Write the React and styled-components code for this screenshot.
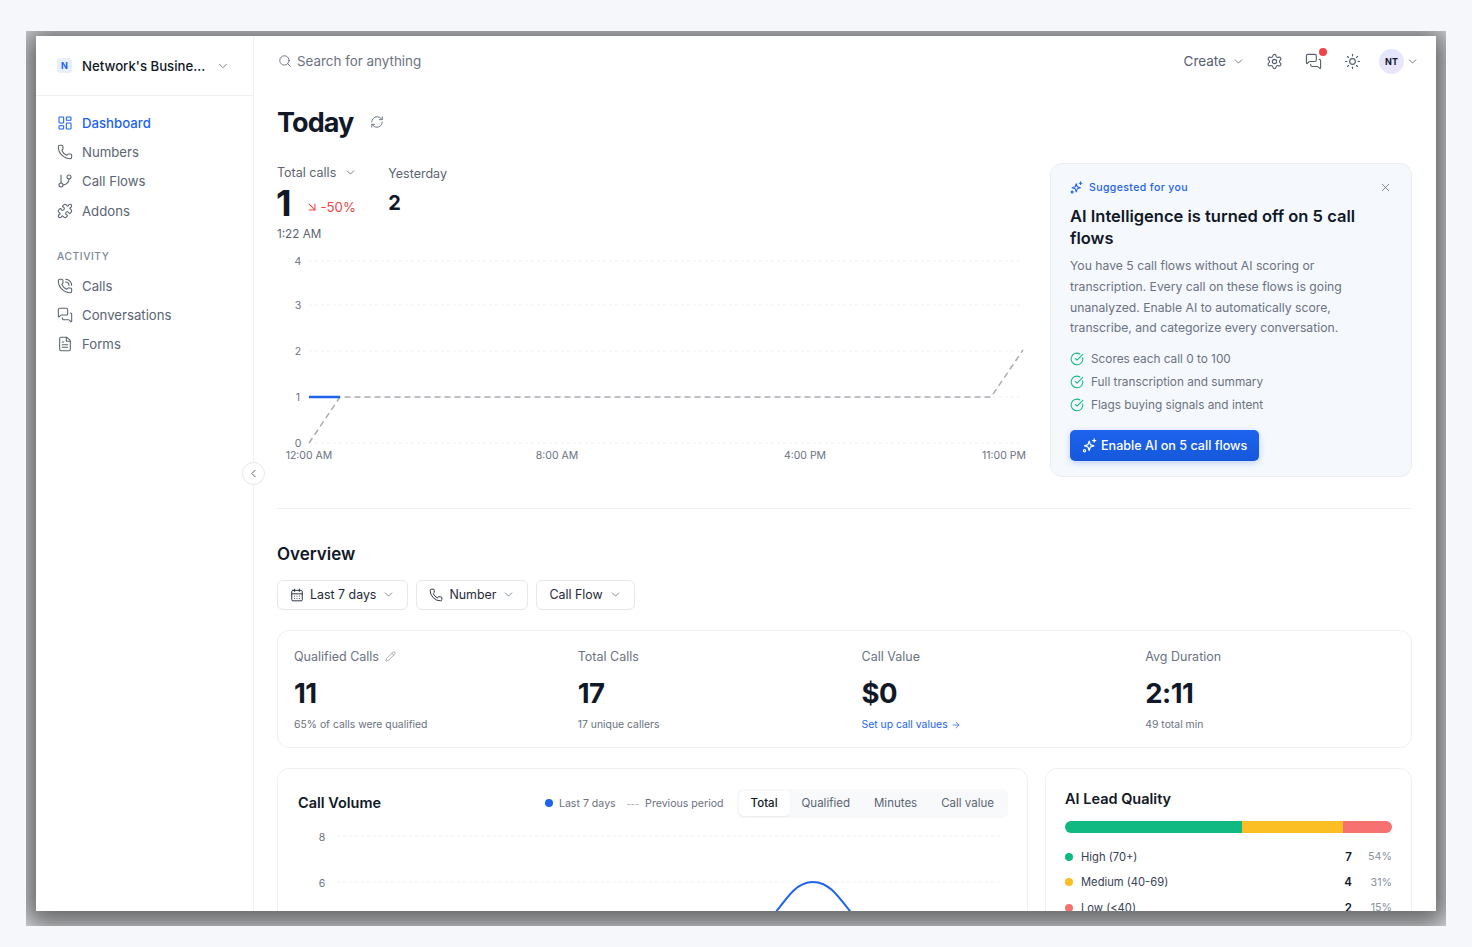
import styled, { createGlobalStyle } from "styled-components";
import {
	ArrowDownRight,
	ArrowRight,
	CalendarDays,
	ChevronDown,
	ChevronLeft,
	CircleCheckBig,
	FileText,
	GitBranch,
	LayoutDashboard,
	MessagesSquare,
	Pencil,
	Phone,
	PhoneCall,
	Puzzle,
	RefreshCw,
	Search,
	Settings,
	Sun,
	X,
} from "lucide-react";

const mainNav = [
	{ label: "Dashboard", icon: LayoutDashboard, active: true },
	{ label: "Numbers", icon: Phone },
	{ label: "Call Flows", icon: GitBranch },
	{ label: "Addons", icon: Puzzle },
];

const activityNav = [
	{ label: "Calls", icon: PhoneCall },
	{ label: "Conversations", icon: MessagesSquare },
	{ label: "Forms", icon: FileText },
];

const benefits = [
	"Scores each call 0 to 100",
	"Full transcription and summary",
	"Flags buying signals and intent",
];

const stats = [
	{ label: "Qualified Calls", value: "11", sub: "65% of calls were qualified", editable: true },
	{ label: "Total Calls", value: "17", sub: "17 unique callers" },
	{ label: "Call Value", value: "$0", link: "Set up call values" },
	{ label: "Avg Duration", value: "2:11", sub: "49 total min" },
];

const quality = [
	{ label: "High (70+)", count: 7, pct: 54, color: "#10b981" },
	{ label: "Medium (40-69)", count: 4, pct: 31, color: "#fbbf24" },
	{ label: "Low (<40)", count: 2, pct: 15, color: "#f87171" },
];

const todayTicks = [
	{ label: "4", y: 11 },
	{ label: "3", y: 55 },
	{ label: "2", y: 101 },
	{ label: "1", y: 147 },
	{ label: "0", y: 193 },
];

const SparkIcon = ({ size = 13 }) => (
	<svg width={size} height={size} viewBox="0 0 24 24" fill="none" stroke="currentColor" strokeWidth="2" strokeLinejoin="round">
		<path d="M11.5 5l1.9 5.6 5.6 1.9-5.6 1.9-1.9 5.6-1.9-5.6L4 12.5l5.6-1.9z" />
		<path d="M19.5 1.5v5M17 4h5" strokeLinecap="round" />
		<circle cx="4" cy="20.5" r="1.8" />
	</svg>
);

const TodayChart = () => (
	<ChartSvg width="753" height="215" viewBox="0 0 753 215">
		{todayTicks.map((t) => (
			<g key={t.label}>
				<line x1="32" x2="745" y1={t.y} y2={t.y} stroke="#f0f1f4" strokeDasharray="3 3" />
				<text x="21" y={t.y + 4} textAnchor="middle">{t.label}</text>
			</g>
		))}
		<path d="M32 193L63 147H714L746 100" fill="none" stroke="#a8acb3" strokeWidth="1.5" strokeDasharray="6 4" />
		<line x1="32" x2="63" y1="147" y2="147" stroke="#1d63ed" strokeWidth="2.5" />
		<text x="32" y="209" textAnchor="middle">12:00 AM</text>
		<text x="280" y="209" textAnchor="middle">8:00 AM</text>
		<text x="528" y="209" textAnchor="middle">4:00 PM</text>
		<text x="727" y="209" textAnchor="middle">11:00 PM</text>
	</ChartSvg>
);

const VolumeChart = () => (
	<ChartSvg width="711" height="100" viewBox="0 0 711 100">
		<line x1="39" x2="705" y1="8" y2="8" stroke="#f0f1f4" strokeDasharray="3 3" />
		<line x1="39" x2="705" y1="54" y2="54" stroke="#f0f1f4" strokeDasharray="3 3" />
		<text x="24" y="13" textAnchor="middle">8</text>
		<text x="24" y="59" textAnchor="middle">6</text>
		<path d="M466 100C490 68 498 54 515 54C532 54 540 68 565 100" fill="none" stroke="#1d63ed" strokeWidth="2" />
	</ChartSvg>
);

const NavList = ({ items }) => (
	<Nav>
		{items.map(({ label, icon: Icon, active }) => (
			<NavItem key={label} $active={active}>
				<Icon size={16} strokeWidth={1.6} />
				{label}
			</NavItem>
		))}
	</Nav>
);

const App = () => {
	return (
		<>
			<GlobalStyle />
			<Stage>
				<ShadowClip>
					<Frame>
						<Sidebar>
							<Workspace>
								<WorkspaceLogo>N</WorkspaceLogo>
								<WorkspaceName>Network's Busine...</WorkspaceName>
								<ChevronDown size={14} strokeWidth={1.5} color="#6b7280" />
							</Workspace>
							<NavList items={mainNav} />
							<SectionLabel>Activity</SectionLabel>
							<NavList items={activityNav} />
							<CollapseButton>
								<ChevronLeft size={13} strokeWidth={1.75} />
							</CollapseButton>
						</Sidebar>

						<Main>
							<Topbar>
								<SearchBox>
									<Search size={14} strokeWidth={1.6} />
									Search for anything
								</SearchBox>
								<TopActions>
									<CreateButton>
										Create
										<ChevronDown size={13} strokeWidth={1.5} />
									</CreateButton>
									<TopIcon>
										<Settings size={17} strokeWidth={1.6} />
									</TopIcon>
									<TopIcon>
										<MessagesSquare size={17} strokeWidth={1.6} />
										<RedDot />
									</TopIcon>
									<TopIcon>
										<Sun size={17} strokeWidth={1.6} />
									</TopIcon>
									<AvatarGroup>
										<Avatar>NT</Avatar>
										<ChevronDown size={13} strokeWidth={1.5} />
									</AvatarGroup>
								</TopActions>
							</Topbar>

							<Content>
								<TitleRow>
									<Title>Today</Title>
									<RefreshCw size={14} strokeWidth={1.6} color="#6b7280" />
								</TitleRow>

								<Hero>
									<div>
										<KpiRow>
											<div>
												<KpiLabel>
													Total calls
													<ChevronDown size={13} strokeWidth={1.5} />
												</KpiLabel>
												<KpiValueRow>
													<KpiValue>1</KpiValue>
													<KpiDelta>
														<ArrowDownRight size={14} strokeWidth={1.75} />
														-50%
													</KpiDelta>
												</KpiValueRow>
												<KpiTime>1:22 AM</KpiTime>
											</div>
											<YesterdayColumn>
												<KpiLabel>Yesterday</KpiLabel>
												<YesterdayValue>2</YesterdayValue>
											</YesterdayColumn>
										</KpiRow>
										<TodayChart />
									</div>

									<SuggestCard>
										<SuggestHead>
											<SuggestTag>
												<SparkIcon />
												Suggested for you
											</SuggestTag>
											<X size={13} strokeWidth={1.5} color="#6b7280" />
										</SuggestHead>
										<SuggestTitle>AI Intelligence is turned off on 5 call flows</SuggestTitle>
										<SuggestBody>
											You have 5 call flows without AI scoring or transcription. Every call on these flows is going
											unanalyzed. Enable AI to automatically score, transcribe, and categorize every conversation.
										</SuggestBody>
										<BenefitList>
											{benefits.map((text) => (
												<Benefit key={text}>
													<CircleCheckBig size={14} strokeWidth={1.75} color="#10b981" />
													{text}
												</Benefit>
											))}
										</BenefitList>
										<EnableButton>
											<SparkIcon size={15} />
											Enable AI on 5 call flows
										</EnableButton>
									</SuggestCard>
								</Hero>

								<Divider />

								<SectionTitle>Overview</SectionTitle>
								<Filters>
									<FilterButton>
										<CalendarDays size={14} strokeWidth={1.6} />
										Last 7 days
										<ChevronDown size={13} strokeWidth={1.5} color="#6b7280" />
									</FilterButton>
									<FilterButton>
										<Phone size={14} strokeWidth={1.6} />
										Number
										<ChevronDown size={13} strokeWidth={1.5} color="#6b7280" />
									</FilterButton>
									<FilterButton>
										Call Flow
										<ChevronDown size={13} strokeWidth={1.5} color="#6b7280" />
									</FilterButton>
								</Filters>

								<StatsCard>
									{stats.map((stat) => (
										<Stat key={stat.label}>
											<StatLabel>
												{stat.label}
												{stat.editable && <Pencil size={11} strokeWidth={1.25} />}
											</StatLabel>
											<StatValue>{stat.value}</StatValue>
											{stat.link ? (
												<StatLink>
													{stat.link}
													<ArrowRight size={10} strokeWidth={1.75} />
												</StatLink>
											) : (
												<StatSub>{stat.sub}</StatSub>
											)}
										</Stat>
									))}
								</StatsCard>

								<BottomGrid>
									<VolumeCard>
										<VolumeHead>
											<CardTitle>Call Volume</CardTitle>
											<VolumeControls>
												<Legend>
													<LegendDot />
													Last 7 days
												</Legend>
												<Legend>
													<LegendDash>---</LegendDash>
													Previous period
												</Legend>
												<Tabs>
													<Tab $active>Total</Tab>
													<Tab>Qualified</Tab>
													<Tab>Minutes</Tab>
													<Tab>Call value</Tab>
												</Tabs>
											</VolumeControls>
										</VolumeHead>
										<VolumeChart />
									</VolumeCard>

									<QualityCard>
										<QualityTitle>AI Lead Quality</QualityTitle>
										<QualityBar>
											{quality.map((q) => (
												<QualitySegment key={q.label} $color={q.color} style={{ width: `${q.pct}%` }} />
											))}
										</QualityBar>
										{quality.map((q) => (
											<QualityRow key={q.label}>
												<QualityDot $color={q.color} />
												<QualityName>{q.label}</QualityName>
												<QualityCount>{q.count}</QualityCount>
												<QualityPct>{q.pct}%</QualityPct>
											</QualityRow>
										))}
									</QualityCard>
								</BottomGrid>
							</Content>
						</Main>
					</Frame>
				</ShadowClip>
			</Stage>
		</>
	);
};

export default App;

// Styled components
const GlobalStyle = createGlobalStyle`
	html, body {
		margin: 0;
		height: 100%;
		overflow: hidden;
		background: #f5f7fb;
	}
	body {
		font-family: Inter, "Liberation Sans", sans-serif;
		color: #111827;
	}
	* {
		box-sizing: border-box;
	}
`;

const Stage = styled.div`
	width: 1472px;
	height: 947px;
	padding: 31px 26px 21px;
`;

const ShadowClip = styled.div`
	height: 895px;
	padding: 5px 10px 15px;
	overflow: hidden;
`;

const Frame = styled.div`
	display: flex;
	height: 875px;
	overflow: hidden;
	background: #fff;
	box-shadow: 0 4px 30px 14px rgba(0, 0, 0, 0.6);
`;

const Sidebar = styled.aside`
	position: relative;
	z-index: 1;
	flex: 0 0 218px;
	border-right: 1px solid #f0f1f4;
`;

const Workspace = styled.div`
	display: flex;
	align-items: center;
	height: 60px;
	padding: 0 23px 0 21px;
	border-bottom: 1px solid #f0f1f4;
`;

const WorkspaceLogo = styled.div`
	display: flex;
	align-items: center;
	justify-content: center;
	width: 15px;
	height: 15px;
	margin-right: 10px;
	border-radius: 3px;
	background: #e8f0fe;
	color: #1d63ed;
	font-size: 9px;
	font-weight: 700;
`;

const WorkspaceName = styled.div`
	flex: 1;
	font-size: 13.2px;
	font-weight: 500;
	white-space: nowrap;
`;

const Nav = styled.nav`
	display: flex;
	flex-direction: column;
	padding: 12px 0 0 21px;
`;

const NavItem = styled.a`
	display: flex;
	align-items: center;
	gap: 9px;
	height: 29.3px;
	font-size: 13.2px;
	font-weight: ${({ $active }) => ($active ? 500 : 400)};
	color: ${({ $active }) => ($active ? "#1d63ed" : "#5b6472")};
`;

const SectionLabel = styled.div`
	margin: 24px 0 -4px 21px;
	font-size: 10.2px;
	font-weight: 500;
	line-height: 14px;
	letter-spacing: 0.6px;
	text-transform: uppercase;
	color: #7d8592;
`;

const CollapseButton = styled.button`
	position: absolute;
	top: 426px;
	right: -12px;
	display: flex;
	align-items: center;
	justify-content: center;
	width: 23px;
	height: 23px;
	padding: 0;
	border: 1px solid #e5e7eb;
	border-radius: 50%;
	background: #fff;
	color: #4b5563;
`;

const Main = styled.main`
	flex: 1;
	min-width: 0;
`;

const Topbar = styled.header`
	display: flex;
	align-items: center;
	justify-content: space-between;
	height: 50px;
	padding: 0 17px 0 24px;
`;

const SearchBox = styled.div`
	display: flex;
	align-items: center;
	gap: 5px;
	font-size: 13.4px;
	color: #6b7280;
`;

const TopActions = styled.div`
	display: flex;
	align-items: center;
	color: #566070;
`;

const CreateButton = styled.div`
	display: flex;
	align-items: center;
	gap: 6px;
	margin-right: 21px;
	font-size: 13.5px;
`;

const TopIcon = styled.div`
	position: relative;
	display: flex;
	width: 17px;
	margin-right: 22px;
`;

const RedDot = styled.span`
	position: absolute;
	top: -5px;
	right: -5px;
	width: 8px;
	height: 8px;
	border-radius: 50%;
	background: #ef4444;
`;

const AvatarGroup = styled.div`
	display: flex;
	align-items: center;
	gap: 2px;
	margin-left: -4px;
`;

const Avatar = styled.div`
	display: flex;
	align-items: center;
	justify-content: center;
	width: 25px;
	height: 25px;
	border-radius: 50%;
	background: linear-gradient(135deg, #dfe7fd, #efe4fb);
	color: #111827;
	font-size: 9px;
	font-weight: 700;
`;

const Content = styled.div`
	padding: 18px 24px 0 23px;
`;

const TitleRow = styled.div`
	display: flex;
	align-items: center;
	gap: 17px;
	height: 36px;
`;

const Title = styled.h1`
	margin: 0;
	font-size: 27px;
	font-weight: 700;
	letter-spacing: -0.9px;
`;

const Hero = styled.section`
	display: grid;
	grid-template-columns: minmax(0, 1fr) 362px;
	gap: 20px;
	margin-top: 23px;
`;

const KpiRow = styled.div`
	display: flex;
	gap: 31px;
	height: 87px;
`;

const KpiLabel = styled.div`
	display: flex;
	align-items: center;
	gap: 8px;
	height: 18px;
	font-size: 12.5px;
	color: #5b6472;
`;

const KpiValueRow = styled.div`
	display: flex;
	align-items: center;
	gap: 13px;
	height: 40px;
	margin-top: 2px;
`;

const KpiValue = styled.div`
	margin-left: -1px;
	font-size: 36px;
	font-weight: 700;
`;

const KpiDelta = styled.div`
	display: flex;
	align-items: center;
	gap: 2px;
	margin-top: 8px;
	font-size: 13.2px;
	color: #ef4444;
`;

const KpiTime = styled.div`
	margin-top: 3px;
	font-size: 11.7px;
	line-height: 16px;
	color: #5b6472;
`;

const YesterdayColumn = styled.div`
	padding-top: 1px;
`;

const YesterdayValue = styled.div`
	margin-top: 9px;
	font-size: 20px;
	font-weight: 700;
`;

const ChartSvg = styled.svg`
	display: block;
	text {
		font-family: Inter, "Liberation Sans", sans-serif;
		font-size: 10.5px;
		fill: #6b7280;
	}
`;

const SuggestCard = styled.aside`
	height: 314px;
	padding: 16px 19px 0;
	border: 1px solid #e9edf3;
	border-radius: 12px;
	background: #f5f8fd;
`;

const SuggestHead = styled.div`
	display: flex;
	align-items: center;
	justify-content: space-between;
	height: 14px;
`;

const SuggestTag = styled.div`
	display: flex;
	align-items: center;
	gap: 6px;
	font-size: 10.5px;
	font-weight: 500;
	letter-spacing: 0.4px;
	color: #1d63ed;
`;

const SuggestTitle = styled.h3`
	margin: 11px 0 7px;
	font-size: 16.5px;
	font-weight: 600;
	line-height: 22px;
`;

const SuggestBody = styled.p`
	margin: 0;
	font-size: 12.2px;
	line-height: 20.8px;
	color: #6b7280;
`;

const BenefitList = styled.div`
	display: flex;
	flex-direction: column;
	gap: 5px;
	margin-top: 11px;
`;

const Benefit = styled.div`
	display: flex;
	align-items: center;
	gap: 7px;
	height: 18px;
	font-size: 11.8px;
	color: #6b7280;
`;

const EnableButton = styled.button`
	display: flex;
	align-items: center;
	gap: 4px;
	height: 31px;
	margin-top: 16px;
	padding: 0 12px;
	border: 0;
	border-radius: 5px;
	background: linear-gradient(#1d63ed, #1558db);
	box-shadow: 0 2px 6px rgba(29, 99, 237, 0.25);
	color: #fff;
	font-family: inherit;
	font-size: 12.6px;
	font-weight: 500;
`;

const Divider = styled.hr`
	height: 1px;
	margin: 31px 0 0;
	border: 0;
	background: #f0f1f4;
`;

const SectionTitle = styled.h2`
	margin: 32px 0 0;
	font-size: 17px;
	font-weight: 600;
	line-height: 26px;
`;

const Filters = styled.div`
	display: flex;
	gap: 8px;
	margin-top: 13px;
`;

const FilterButton = styled.button`
	display: flex;
	align-items: center;
	gap: 6px;
	height: 30px;
	padding: 0 12px 1px;
	border: 1px solid #e5e7eb;
	border-radius: 6px;
	background: #fff;
	color: #1f2937;
	font-family: inherit;
	font-size: 12.4px;
`;

const StatsCard = styled.section`
	display: grid;
	grid-template-columns: repeat(4, 283.75px);
	height: 118px;
	margin-top: 20px;
	padding: 16px 0 16px 16px;
	overflow: hidden;
	border: 1px solid #eff0f3;
	border-radius: 12px;
`;

const Stat = styled.div`
	display: flex;
	flex-direction: column;
`;

const StatLabel = styled.div`
	display: flex;
	align-items: center;
	gap: 6px;
	height: 18px;
	font-size: 12.5px;
	color: #6b7280;
`;

const StatValue = styled.div`
	margin-top: 10px;
	font-size: 27.5px;
	font-weight: 700;
	line-height: 36px;
	letter-spacing: -0.5px;
`;

const StatSub = styled.div`
	margin-top: 7px;
	font-size: 10.4px;
	line-height: 14px;
	color: #6b7280;
`;

const StatLink = styled(StatSub)`
	display: flex;
	align-items: center;
	gap: 3px;
	color: #1d63ed;
`;

const BottomGrid = styled.section`
	display: grid;
	grid-template-columns: minmax(0, 1fr) 367px;
	gap: 17px;
	margin-top: 20px;
`;

const VolumeCard = styled.div`
	height: 320px;
	padding: 20px 19px 20px 20px;
	border: 1px solid #eff0f3;
	border-radius: 12px;
`;

const VolumeHead = styled.div`
	display: flex;
	align-items: center;
	justify-content: space-between;
	height: 29px;
	margin-bottom: 10px;
`;

const CardTitle = styled.h3`
	margin: 0 0 2px;
	font-size: 14.5px;
	font-weight: 600;
`;

const VolumeControls = styled.div`
	display: flex;
	align-items: center;
	gap: 11px;
`;

const Legend = styled.div`
	display: flex;
	align-items: center;
	gap: 6px;
	margin-bottom: 1px;
	font-size: 10.6px;
	color: #6b7280;
`;

const LegendDot = styled.span`
	width: 8px;
	height: 8px;
	border-radius: 50%;
	background: #1d63ed;
`;

const LegendDash = styled.span`
	font-size: 9px;
	color: #9ca3af;
`;

const Tabs = styled.div`
	display: flex;
	height: 29px;
	margin-left: 2px;
	padding: 2px;
	border-radius: 6px;
	background: #f8f9fa;
`;

const Tab = styled.div`
	display: flex;
	align-items: center;
	padding: 0 12px 1px;
	border-radius: 5px;
	background: ${({ $active }) => ($active ? "#fff" : "transparent")};
	box-shadow: ${({ $active }) => ($active ? "0 1px 2px rgba(0, 0, 0, 0.06)" : "none")};
	color: ${({ $active }) => ($active ? "#111827" : "#5b6472")};
	font-size: 11.5px;
	font-weight: ${({ $active }) => ($active ? 500 : 400)};
`;

const QualityCard = styled.div`
	height: 320px;
	padding: 20px 19px;
	border: 1px solid #eff0f3;
	border-radius: 12px;
`;

const QualityTitle = styled(CardTitle)`
	margin-bottom: 0;
	line-height: 20px;
`;

const QualityBar = styled.div`
	display: flex;
	height: 12px;
	margin: 12px 0 11px;
	overflow: hidden;
	border-radius: 6px;
`;

const QualitySegment = styled.div`
	background: ${({ $color }) => $color};
`;

const QualityRow = styled.div`
	display: flex;
	align-items: center;
	height: 25.5px;
	font-size: 11.2px;
`;

const QualityDot = styled.span`
	width: 8px;
	height: 8px;
	margin-right: 8px;
	border-radius: 50%;
	background: ${({ $color }) => $color};
`;

const QualityName = styled.span`
	flex: 1;
	color: #374151;
`;

const QualityCount = styled.span`
	font-size: 11.5px;
	font-weight: 600;
`;

const QualityPct = styled.span`
	width: 40px;
	text-align: right;
	font-size: 10.7px;
	color: #8a919e;
`;
